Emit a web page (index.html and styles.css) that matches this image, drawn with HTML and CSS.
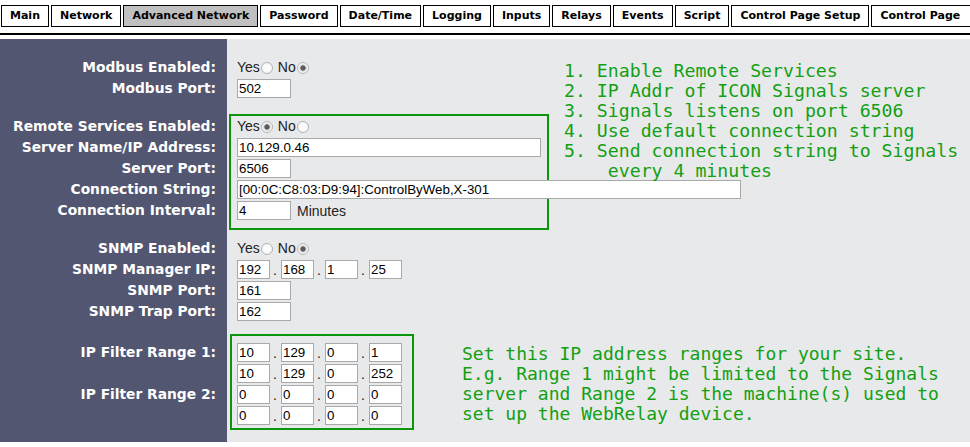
FILE: index.html
```html
<!DOCTYPE html>
<html lang="en">
<head>
<meta charset="utf-8">
<title>Advanced Network</title>
<link rel="stylesheet" href="styles.css">
</head>
<body>
<nav class="tabs">
  <a class="tab">Main</a>
  <a class="tab">Network</a>
  <a class="tab active">Advanced Network</a>
  <a class="tab">Password</a>
  <a class="tab">Date/Time</a>
  <a class="tab">Logging</a>
  <a class="tab">Inputs</a>
  <a class="tab">Relays</a>
  <a class="tab">Events</a>
  <a class="tab">Script</a>
  <a class="tab">Control Page Setup</a>
  <a class="tab">Control Page</a>
</nav>
<div class="rule"></div>
<main class="main">
  <section class="group g1">
    <div class="labels">
      <div class="lbl">Modbus Enabled:</div>
      <div class="lbl">Modbus Port:</div>
    </div>
    <div class="controls">
      <div class="row"><label class="opt">Yes<input class="radio" type="radio" name="mb"></label><label class="opt no">No<input class="radio" type="radio" name="mb" checked></label></div>
      <div class="row"><input class="field w-port" value="502"></div>
    </div>
  </section>

  <section class="group g2">
    <div class="labels">
      <div class="lbl">Remote Services Enabled:</div>
      <div class="lbl">Server Name/IP Address:</div>
      <div class="lbl">Server Port:</div>
      <div class="lbl">Connection String:</div>
      <div class="lbl">Connection Interval:</div>
    </div>
    <div class="controls boxed">
      <div class="row"><label class="opt">Yes<input class="radio" type="radio" name="rs" checked></label><label class="opt no">No<input class="radio" type="radio" name="rs"></label></div>
      <div class="row"><input class="field w-host" value="10.129.0.46"></div>
      <div class="row"><input class="field w-port" value="6506"></div>
      <div class="row"><input class="field w-conn" value="[00:0C:C8:03:D9:94]:ControlByWeb,X-301"></div>
      <div class="row"><input class="field w-port" value="4"><span class="unit">Minutes</span></div>
    </div>
  </section>

  <section class="group g3">
    <div class="labels">
      <div class="lbl">SNMP Enabled:</div>
      <div class="lbl">SNMP Manager IP:</div>
      <div class="lbl">SNMP Port:</div>
      <div class="lbl">SNMP Trap Port:</div>
    </div>
    <div class="controls">
      <div class="row"><label class="opt">Yes<input class="radio" type="radio" name="sn"></label><label class="opt no">No<input class="radio" type="radio" name="sn" checked></label></div>
      <div class="row"><input class="field w-oct" value="192"><span class="dot">.</span><input class="field w-oct" value="168"><span class="dot">.</span><input class="field w-oct" value="1"><span class="dot">.</span><input class="field w-oct" value="25"></div>
      <div class="row"><input class="field w-port" value="161"></div>
      <div class="row"><input class="field w-port" value="162"></div>
    </div>
  </section>

  <section class="group g4">
    <div class="labels">
      <div class="lbl tall">IP Filter Range 1:</div>
      <div class="lbl tall">IP Filter Range 2:</div>
    </div>
    <div class="controls boxed">
      <div class="row"><input class="field w-oct" value="10"><span class="dot">.</span><input class="field w-oct" value="129"><span class="dot">.</span><input class="field w-oct" value="0"><span class="dot">.</span><input class="field w-oct" value="1"></div>
      <div class="row"><input class="field w-oct" value="10"><span class="dot">.</span><input class="field w-oct" value="129"><span class="dot">.</span><input class="field w-oct" value="0"><span class="dot">.</span><input class="field w-oct" value="252"></div>
      <div class="row"><input class="field w-oct" value="0"><span class="dot">.</span><input class="field w-oct" value="0"><span class="dot">.</span><input class="field w-oct" value="0"><span class="dot">.</span><input class="field w-oct" value="0"></div>
      <div class="row"><input class="field w-oct" value="0"><span class="dot">.</span><input class="field w-oct" value="0"><span class="dot">.</span><input class="field w-oct" value="0"><span class="dot">.</span><input class="field w-oct" value="0"></div>
    </div>
  </section>

  <pre class="note note-remote">1. Enable Remote Services
2. IP Addr of ICON Signals server
3. Signals listens on port 6506
4. Use default connection string
5. Send connection string to Signals
    every 4 minutes</pre>

  <pre class="note note-filter">Set this IP address ranges for your site.
E.g. Range 1 might be limited to the Signals
server and Range 2 is the machine(s) used to
set up the WebRelay device.</pre>
</main>
</body>
</html>
```

FILE: styles.css
```css
* {
  box-sizing: border-box;
}

body {
  margin: 0;
  background: #ffffff;
  font-family: "Liberation Sans", Arial, sans-serif;
}

/* ---- tab strip ---- */
.tabs {
  display: flex;
  gap: 2px;
  height: 27px;
  padding: 5px 0 0 1px;
  overflow: hidden;
  white-space: nowrap;
}

.tab {
  flex: none;
  height: 22px;
  padding: 0 8px;
  border: 1px solid #000;
  background: #fff;
  color: #000;
  font: bold 11px/20px "DejaVu Sans", Verdana, sans-serif;
}

.tab.active {
  background: #c0c0c0;
}

.tab:last-child {
  padding-right: 10px;
}

.rule {
  height: 2px;
  margin-top: 6px;
  background: #000;
}

/* ---- form area ---- */
.main {
  position: relative;
  height: 403px;
  margin-top: 4px;
  overflow: hidden;
  background: linear-gradient(to right, #525670 0, #525670 227px, #e8e9eb 227px);
}

.group {
  display: flex;
}

.labels {
  flex: none;
  width: 227px;
  padding-right: 11px;
  text-align: right;
  color: #fff;
  font: bold 13.8px/21px "DejaVu Sans", Verdana, sans-serif;
}

.lbl {
  height: 21px;
  white-space: nowrap;
}

.lbl.tall {
  height: 42px;
}

.controls {
  padding-left: 10px;
  color: #222;
  font-size: 14px;
}

.controls.boxed {
  margin-left: 2px;
  border: 2px solid #0c960c;
  padding: 0 0 7px 6px;
}

.row {
  display: flex;
  align-items: center;
  height: 21px;
  white-space: nowrap;
}

.g1 { margin-top: 18px; }

.g2 { margin-top: 15px; }
.g2 .labels { padding-top: 2px; }
.g2 .controls { width: 320px; }

.g3 { margin-top: 8px; }

.g4 { margin-top: 12px; }
.g4 .labels { padding-top: 8px; }
.g4 .controls {
  margin-left: 3px;
  padding: 6px 10px 2px 5px;
}

/* ---- controls ---- */
.opt {
  display: inline-flex;
  align-items: center;
  line-height: 21px;
}

.opt.no {
  margin-left: 5px;
}

.radio {
  appearance: none;
  -webkit-appearance: none;
  width: 12px;
  height: 12px;
  margin: 0 0 0 1px;
  border: 1px solid #b3b3b3;
  border-radius: 50%;
  background: radial-gradient(circle, #ffffff 0, #f2f2f2 100%);
}

.radio:checked {
  background: radial-gradient(circle, #5a5a5a 0, #5a5a5a 2.2px, #d6d6d6 3px, #ffffff 5px);
}

.field {
  flex: none;
  height: 19px;
  margin: 0;
  padding: 0 1px;
  border: 1px solid #a9a9a9;
  background: #fff;
  color: #000;
  font: 13.33px "Liberation Sans", Arial, sans-serif;
  outline: none;
}

.w-port { width: 54px; }
.w-host { width: 304px; }
.w-conn { width: 504px; }
.w-oct  { width: 33px; }

.dot {
  width: 11px;
  padding-left: 3px;
  font-size: 14px;
  color: #222;
}

.unit {
  margin-left: 6px;
  font-size: 14px;
  color: #222;
}

/* ---- annotations drawn over the form ---- */
.note {
  position: absolute;
  margin: 0;
  color: #12a012;
  font: 18px/20px "DejaVu Sans Mono", Consolas, monospace;
  white-space: pre;
}

.note-remote {
  left: 564px;
  top: 22px;
  font-size: 18.2px;
}

.note-filter {
  left: 462px;
  top: 305px;
}
```
